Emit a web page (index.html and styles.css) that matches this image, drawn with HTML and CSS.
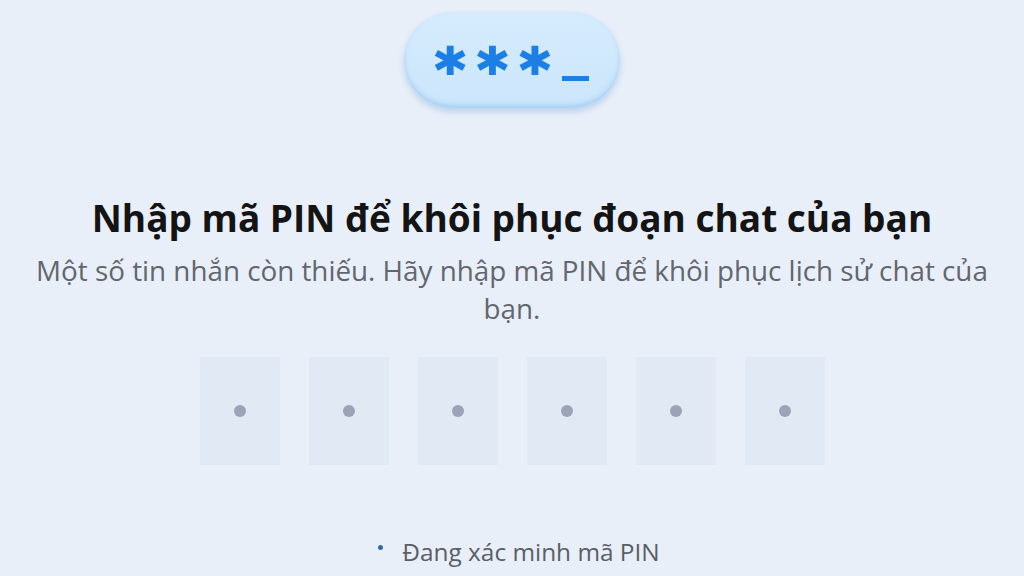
FILE: index.html
```html
<!DOCTYPE html>
<html lang="vi">
<head>
<meta charset="utf-8">
<link rel="stylesheet" href="styles.css">
</head>
<body>
<main class="page">
  <div class="pill"><span class="stars">***</span><span class="cursor">_</span></div>
  <h1 class="title">Nhập mã PIN để khôi phục đoạn chat của bạn</h1>
  <p class="subtitle">Một số tin nhắn còn thiếu. Hãy nhập mã PIN để khôi phục lịch sử chat của bạn.</p>
  <div class="pins">
    <div class="pin"><span class="dot"></span></div>
    <div class="pin"><span class="dot"></span></div>
    <div class="pin"><span class="dot"></span></div>
    <div class="pin"><span class="dot"></span></div>
    <div class="pin"><span class="dot"></span></div>
    <div class="pin"><span class="dot"></span></div>
  </div>
  <div class="status"><span class="spinner"></span><span>Đang xác minh mã PIN</span></div>
</main>
</body>
</html>
```
FILE: styles.css
```css
html, body {
  margin: 0;
  padding: 0;
  background: #e9eff8;
  width: 1024px;
  height: 576px;
  overflow: hidden;
  font-family: "Open Sans", "Noto Sans", sans-serif;
}
.page {
  display: flex;
  flex-direction: column;
  align-items: center;
  padding-top: 12px;
}
.pill {
  width: 216px;
  height: 96px;
  border-radius: 48px;
  background: linear-gradient(#d6ecfd, #cbe5fb);
  box-shadow: 0 4px 6px rgba(120, 170, 220, 0.4), inset 0 -3px 4px rgba(130, 190, 240, 0.5);
  display: flex;
  align-items: center;
  justify-content: center;
  color: #1c7fe6;
  font-weight: 700;
  font-family: "DejaVu Sans", sans-serif;
}
.stars {
  font-size: 58px;
  letter-spacing: 12px;
  line-height: 1;
  margin-top: 20px;
  -webkit-text-stroke: 2px #1c7fe6;
}
.cursor {
  font-size: 54px;
  line-height: 1;
  margin-bottom: 20px;
  font-weight: 700;
}
.title {
  margin: 88px 0 0;
  font-size: 37px;
  font-weight: 700;
  color: #141414;
  line-height: 44px;
}
.subtitle {
  margin: 11px 0 0;
  width: 990px;
  text-align: center;
  font-size: 27.8px;
  line-height: 38px;
  color: #62666e;
}
.pins {
  display: flex;
  gap: 29px;
  margin-top: 30px;
}
.pin {
  width: 80px;
  height: 108px;
  background: #e1e9f5;
  display: flex;
  align-items: center;
  justify-content: center;
}
.dot {
  width: 12px;
  height: 12px;
  border-radius: 50%;
  background: #9ba4b6;
}
.status {
  margin: 70px 0 0 14px;
  display: flex;
  align-items: center;
  gap: 19px;
  font-size: 24.4px;
  line-height: 33px;
  color: #5a5e66;
}
.spinner {
  width: 5px;
  height: 5px;
  border-radius: 50%;
  background: #2f6aa8;
  margin-top: -8px;
}
```
